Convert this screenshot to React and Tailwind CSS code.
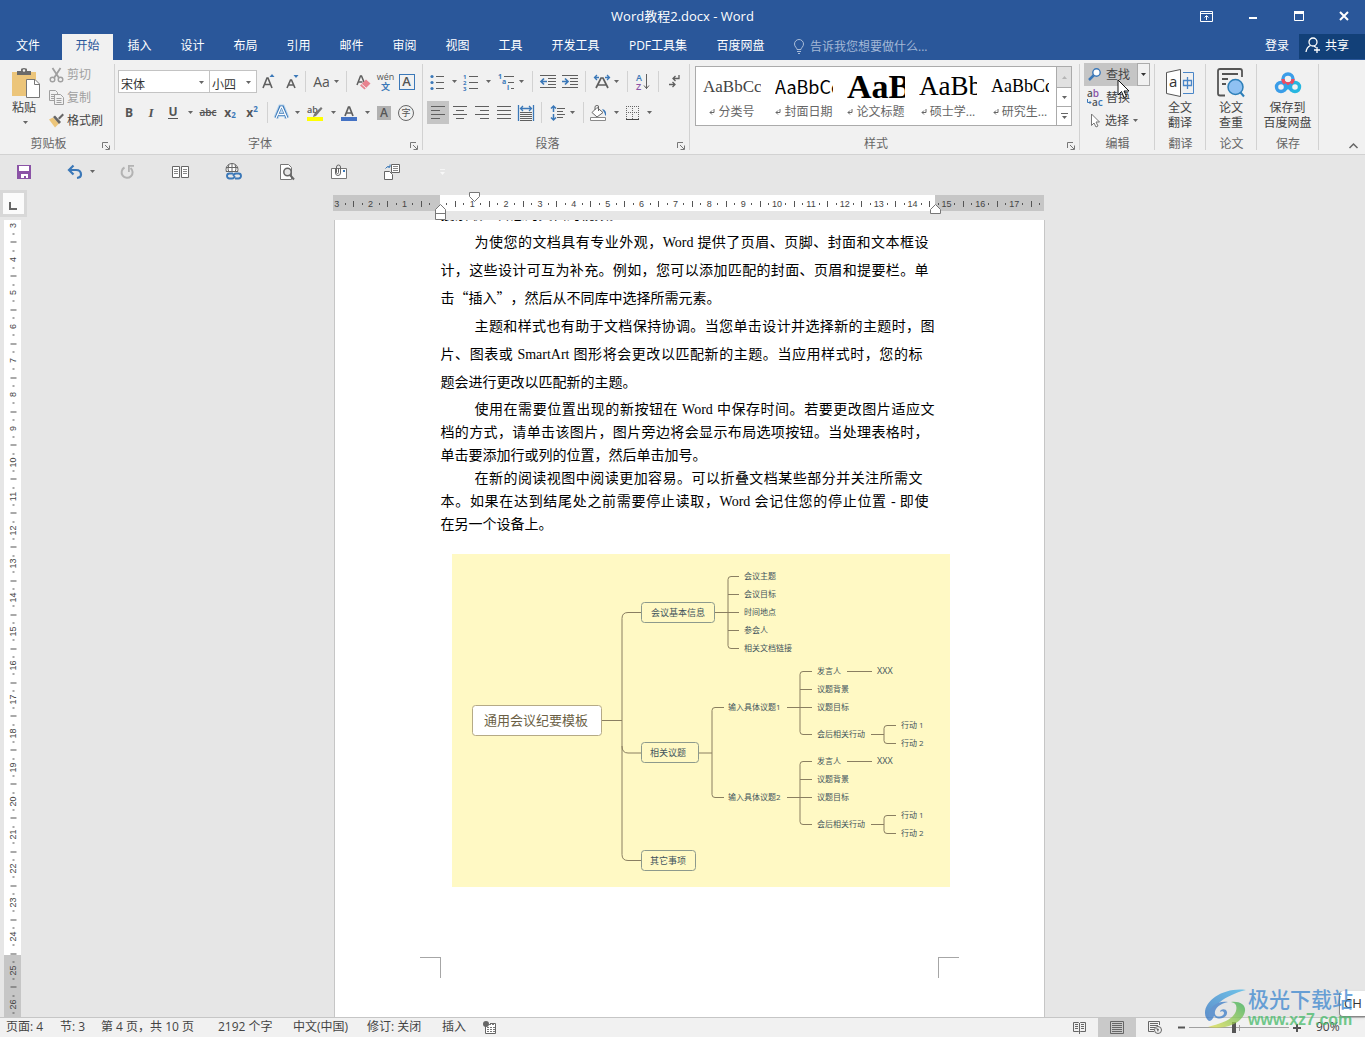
import React, { useState } from 'react';

const TABS = [
  { label: '插入', width: 'w-[53px]' },
  { label: '设计', width: 'w-[53px]' },
  { label: '布局', width: 'w-[53px]' },
  { label: '引用', width: 'w-[53px]' },
  { label: '邮件', width: 'w-[53px]' },
  { label: '审阅', width: 'w-[53px]' },
  { label: '视图', width: 'w-[53px]' },
  { label: '工具', width: 'w-[53px]' },
  { label: '开发工具', width: 'w-[77px]' },
  { label: 'PDF工具集', width: 'w-[88px]' },
  { label: '百度网盘', width: 'w-[77px]' },
];

const STYLES = [
  { name: '分类号', look: 'font-["Liberation_Serif"] text-[17px] text-[#444]' },
  { name: '封面日期', look: 'font-["Noto_Sans_CJK_SC"] text-[18px] text-black' },
  { name: '论文标题', look: 'font-["Liberation_Serif"] text-[34px] font-bold text-black' },
  { name: '硕士学...', look: 'font-["Liberation_Serif"] text-[27px] text-black' },
  { name: '研究生...', look: 'font-["Liberation_Serif"] text-[18px] text-black' },
];

// w = line width, only the justified lines have one
const LOOSE = [
  [
    { text: '为使您的文档具有专业外观，Word 提供了页眉、页脚、封面和文本框设', w: 'w-[488px]' },
    { text: '计，这些设计可互为补充。例如，您可以添加匹配的封面、页眉和提要栏。单', w: 'w-[488px]' },
    { text: '击“插入”，然后从不同库中选择所需元素。', cjk: true },
  ],
  [
    { text: '主题和样式也有助于文档保持协调。当您单击设计并选择新的主题时，图', w: 'w-[494px]' },
    { text: '片、图表或 SmartArt 图形将会更改以匹配新的主题。当应用样式时，您的标', w: 'w-[482px]' },
    { text: '题会进行更改以匹配新的主题。' },
  ],
];

const TIGHT = [
  [
    { text: '使用在需要位置出现的新按钮在 Word 中保存时间。若要更改图片适应文', w: 'w-[494px]' },
    { text: '档的方式，请单击该图片，图片旁边将会显示布局选项按钮。当处理表格时，', w: 'w-[488px]' },
    { text: '单击要添加行或列的位置，然后单击加号。' },
  ],
  [
    { text: '在新的阅读视图中阅读更加容易。可以折叠文档某些部分并关注所需文', w: 'w-[482px]' },
    { text: '本。如果在达到结尾处之前需要停止读取，Word 会记住您的停止位置 - 即使', w: 'w-[488px]' },
    { text: '在另一个设备上。' },
  ],
];

function Svg({ w = 16, h = 16, children, className = '' }) {
  return (
    <svg width={w} height={h} viewBox={`0 0 ${w} ${h}`} fill="none" className={`shrink-0 overflow-visible ${className}`} aria-hidden="true">
      {children}
    </svg>
  );
}

function Caret({ color = '#666' }) {
  return (
    <Svg w={5} h={3}>
      <path d="M0 0h5L2.5 3z" fill={color} />
    </Svg>
  );
}

function Sep() {
  return <div className="h-[21px] w-px shrink-0 bg-[#d2d2d2]" />;
}

function Tool({ label, className = '', children }) {
  return (
    <button type="button" title={label} aria-label={label} className={`flex h-[23px] shrink-0 items-center justify-center ${className}`}>
      {children}
    </button>
  );
}

function Group({ title, width, launcher, children }) {
  return (
    <section className={`relative flex h-[94px] shrink-0 flex-col ${width}`}>
      <div className="h-[76px]">{children}</div>
      <div className="relative h-4 text-center text-[12px] leading-4 text-[#666]">
        <span className={launcher ? 'pr-[18px]' : ''}>{title}</span>
        {launcher && (
          <button type="button" aria-label={`${title}设置`} className="absolute bottom-[2px] right-[5px]">
            <Svg w={8} h={8}>
              <path d="M0.500 6V0.500H6M3 3l4 4M7.500 3.500v4h-4" stroke="#777" />
            </Svg>
          </button>
        )}
      </div>
      <div className="absolute right-0 top-1 h-[86px] w-px bg-[#d2d2d2]" />
    </section>
  );
}

/* ---------- title bar and tabs ---------- */

function TitleBar() {
  return (
    <header className="bg-[#2a579a] text-white">
      <div className="relative flex h-[34px] items-center justify-center pb-[2px]">
        <h1 className="text-[13px] leading-5">Word教程2.docx - Word</h1>
        <div className="absolute right-0 top-0 flex h-8 items-center">
          <button type="button" aria-label="功能区显示选项" className="flex w-[46px] justify-center">
            <Svg w={13} h={11}>
              <path d="M0.500 0.500h12v10H0.500zM0.500 2.500h12M6.500 9V5M4.500 6.500l2-2 2 2" stroke="#fff" />
            </Svg>
          </button>
          <button type="button" aria-label="最小化" className="flex w-[46px] justify-center">
            <Svg w={9} h={11}><path d="M1 7h8" stroke="#fff" strokeWidth="2" /></Svg>
          </button>
          <button type="button" aria-label="最大化" className="flex w-[48px] justify-center">
            <Svg w={10} h={10}><path d="M0.500 1.500h9v8h-9z" stroke="#fff" /><path d="M0 1.500h10" stroke="#fff" strokeWidth="3" /></Svg>
          </button>
          <button type="button" aria-label="关闭" className="flex w-[42px] justify-center">
            <Svg w={10} h={10}><path d="M1 1l8 8M9 1l-8 8" stroke="#fff" strokeWidth="2" /></Svg>
          </button>
        </div>
      </div>

      <nav className="flex h-[26px] text-[12px] leading-[23px]">
        <button type="button" className="w-[56px] pb-[3px]">文件</button>
        <button type="button" className="ml-[6px] w-[51px] bg-[#f1f1f1] pb-[3px] text-[#2a579a]">开始</button>
        {TABS.map((tab) => (
          <button type="button" key={tab.label} className={`pb-[3px] ${tab.width}`}>{tab.label}</button>
        ))}
        <label className="ml-[14px] flex items-center gap-[5px] pb-[1px]">
          <Svg w={12} h={15}>
            <path d="M4 10.500C4 8.500 1.500 8 1.500 5a4.500 4.500 0 0 1 9 0c0 3-2.500 3.500-2.500 5.500zM4 12.500h4M5 14.500h2" stroke="#a9bcd8" />
          </Svg>
          <input placeholder="告诉我您想要做什么..." aria-label="告诉我您想要做什么" className="w-[150px] bg-transparent text-[12px] outline-none placeholder:text-[#a3b8d6]" />
        </label>
        <div className="ml-auto flex">
          <a href="#login" className="px-[10px]">登录</a>
          <button type="button" className="flex h-[25px] w-[66px] items-center gap-1 bg-[#124078] pb-[3px] pl-[6px]">
            <Svg w={16} h={16}>
              <circle cx="8" cy="5" r="4" stroke="#fff" strokeWidth="1.300" />
              <path d="M1 15c0.500-3.500 2-5.500 4.500-6.500M9 9l2 1.500M12 10v6M9 13h6" stroke="#fff" strokeWidth="1.300" />
            </Svg>
            共享
          </button>
        </div>
      </nav>
    </header>
  );
}

/* ---------- ribbon groups ---------- */

function ClipboardGroup() {
  return (
    <Group title="剪贴板" width="w-[115px]" launcher>
      <div className="flex pl-[10px]">
        <button type="button" className="flex w-[30px] flex-col items-center pt-2 text-[12px] leading-[15px] text-[#444]">
          <Svg w={28} h={30} className="ml-[2px]">
            <path d="M0 4h24v24H0z" fill="#ecc57a" />
            <path d="M5 3h4V1.500Q9 0 12 0t3 1.500V3h4v4H5z" fill="#6a6a6a" />
            <circle cx="12" cy="2.500" r="1.200" fill="#f1f1f1" />
            <path d="M14.500 11.500h8.500l4.500 4.500v13.500h-13z" fill="#fff" stroke="#777" />
            <path d="M22.500 11.500v5h5" stroke="#777" />
          </Svg>
          <span className="mt-[2px] pr-[2px]">粘贴</span>
          <span className="mt-[6px]"><Caret /></span>
        </button>
        <div className="flex flex-col pl-[9px] pt-[3px] text-[12px] text-[#a0a0a0]">
          <button type="button" className="flex h-[23px] items-center gap-[3px]">
            <Svg w={15} h={16}>
              <path d="M3.500 1l6.500 10M11.500 1l-6.500 10" stroke="#a0a0a0" strokeWidth="1.800" />
              <circle cx="3.500" cy="12.500" r="2.300" stroke="#a0a0a0" strokeWidth="1.400" />
              <circle cx="11.500" cy="12.500" r="2.300" stroke="#a0a0a0" strokeWidth="1.400" />
            </Svg>
            剪切
          </button>
          <button type="button" className="flex h-[23px] items-center gap-[3px]">
            <Svg w={15} h={15}>
              <path d="M0.500 0.500h6l2 2v8h-8zM2 4.500h4M2 6.500h3M2 8.500h3" stroke="#a0a0a0" />
              <path d="M5.500 4.500h6l3 3v7h-9z" fill="#f1f1f1" stroke="#a0a0a0" />
              <path d="M7.500 8.500h5M7.500 10.500h5M7.500 12.500h5" stroke="#a0a0a0" />
            </Svg>
            复制
          </button>
          <button type="button" className="flex h-[23px] items-center gap-[3px] text-[#444]">
            <Svg w={15} h={15}>
              <path d="M0 6.500L4 4.500l6 6L6 14.500z" fill="#ecc57a" />
              <path d="M4 4l2-1.500 6 6.500-2 2zM9 5l4.500-4.500L15 2l-4.500 4.500z" fill="#666" />
            </Svg>
            格式刷
          </button>
        </div>
      </div>
    </Group>
  );
}

function Combo({ label, value, className }) {
  return (
    <div className={`relative h-[23px] border border-[#c3c3c3] bg-white ${className}`}>
      <select aria-label={label} defaultValue={value} className="h-full w-full appearance-none pb-[2px] pl-[2px] text-[12px] leading-[19px] text-[#333] outline-none">
        <option>{value}</option>
      </select>
      <span className="pointer-events-none absolute right-[5px] top-[10px] leading-none"><Caret /></span>
    </div>
  );
}

function FontGroup() {
  return (
    <Group title="字体" width="w-[308px]" launcher>
      <div className="flex flex-col gap-2 pt-[10px] text-[#555]">
        <div className="flex items-center pl-[3px]">
          <Combo label="字体" value="宋体" className="w-[92px]" />
          <Combo label="字号" value="小四" className="-ml-px w-[48px]" />
          <Tool label="增大字号" className="w-[24px]">
            <Svg w={14} h={15}>
              <path d="M1 14L5 4h1l4 10M2.500 10.500h6" stroke="#5f5f5f" strokeWidth="1.600" />
              <path d="M7.500 3L10 0l2.500 3z" fill="#3b78b8" />
            </Svg>
          </Tool>
          <Tool label="减小字号" className="w-[22px]">
            <Svg w={13} h={15}>
              <path d="M1 14L4.500 6h1L9 14M2.500 11h5" stroke="#5f5f5f" strokeWidth="1.600" />
              <path d="M7.500 1h5L10 4z" fill="#3b78b8" />
            </Svg>
          </Tool>
          <div className="w-[2px]" />
          <Sep />
          <Tool label="更改大小写" className="w-[40px] gap-1">
            <span className="text-[14px]">Aa</span>
            <Caret />
          </Tool>
          <Sep />
          <Tool label="清除所有格式" className="w-[32px]">
            <Svg w={15} h={16}>
              <path d="M1 11L4.500 2h1L8 8M2.500 8h4" stroke="#5f5f5f" strokeWidth="1.500" />
              <path d="M10 5.500l4.500 4-6 6L4 11.500z" fill="#e8838f" />
              <path d="M5.500 10l4.500 4" stroke="#f1f1f1" />
            </Svg>
          </Tool>
          <Tool label="拼音指南" className="w-[13px] flex-col">
            <span className="text-[9px] leading-[10px]">wén</span>
            <span className="text-[9px] font-bold leading-[9px] text-[#3b78b8]">文</span>
          </Tool>
          <Tool label="字符边框" className="w-[29px]">
            <span className="flex h-4 w-4 items-center justify-center border border-[#3b78b8] text-[13px] font-semibold leading-none">A</span>
          </Tool>
        </div>

        <div className="flex items-center pl-[3px]">
          <Tool label="加粗" className="w-[22px] text-[12px] font-bold">B</Tool>
          <Tool label="倾斜" className="w-[22px] font-['Liberation_Serif'] text-[13px] font-bold italic">I</Tool>
          <Tool label="下划线" className="w-[22px] text-[12px] font-bold"><span className="border-b border-[#555] leading-[12px]">U</span></Tool>
          <Tool label="下划线样式" className="w-[13px]"><Caret /></Tool>
          <Tool label="删除线" className="w-[22px] text-[10px] font-semibold line-through">abc</Tool>
          <Tool label="下标" className="w-[22px] text-[12px] font-bold">x<sub className="text-[8px] text-[#3b78b8]">2</sub></Tool>
          <Tool label="上标" className="w-[22px] text-[12px] font-bold">x<sup className="text-[8px] text-[#3b78b8]">2</sup></Tool>
          <div className="w-[4px]" />
          <Sep />
          <Tool label="文本效果和版式" className="w-[38px] gap-[6px]">
            <Svg w={15} h={15}>
              <path d="M2 13L6.500 2h2L13 13M4.500 9.500h6" stroke="#b6d3ec" strokeWidth="5" />
              <path d="M2 13L6.500 2h2L13 13M4.500 9.500h6" stroke="#3b78b8" strokeWidth="3" />
              <path d="M2 13L7 2h1L13 13M4.500 9.500h6" stroke="#fff" strokeWidth="1.300" />
            </Svg>
            <Caret />
          </Tool>
          <Tool label="突出显示颜色" className="w-[31px] gap-2">
            <Svg w={16} h={16}>
              <text x="0" y="8" fontSize="9" fontWeight="600" fill="#555">ab</text>
              <path d="M7 9l7-7 1.500 1.500L9 11l-3 1z" fill="#777" />
              <path d="M0 12h16v4H0z" fill="#ffff00" />
            </Svg>
            <Caret />
          </Tool>
          <Tool label="字体颜色" className="w-[37px] gap-2">
            <Svg w={16} h={16}>
              <path d="M4 11L7.500 2h1L12 11M5 8h6" stroke="#5f5f5f" strokeWidth="1.700" />
              <path d="M0 12h16v4H0z" fill="#4472c4" />
            </Svg>
            <Caret />
          </Tool>
          <Tool label="字符底纹" className="w-[20px]">
            <span className="flex h-[14px] w-[14px] items-center justify-center bg-[#b1b1b1] text-[12px] font-semibold leading-none">A</span>
          </Tool>
          <Tool label="带圈字符" className="w-[24px]">
            <span className="flex h-4 w-4 items-center justify-center rounded-full border border-[#666] text-[9px] leading-none">字</span>
          </Tool>
        </div>
      </div>
    </Group>
  );
}

function AlignIcon({ d }) {
  return (
    <Svg w={14} h={13}>
      <path d={d} stroke="#5f5f5f" />
    </Svg>
  );
}

function ParagraphGroup() {
  return (
    <Group title="段落" width="w-[267px]" launcher>
      <div className="flex flex-col gap-2 pt-[10px]">
        <div className="flex items-center pl-[3px]">
          <Tool label="项目符号" className="w-[34px] gap-2">
            <Svg w={14} h={16}>
              <circle cx="2" cy="2.500" r="1.600" fill="#3b78b8" />
              <circle cx="2" cy="8.500" r="1.600" fill="#3b78b8" />
              <circle cx="2" cy="14.500" r="1.600" fill="#3b78b8" />
              <path d="M6 2.500h8M6 8.500h8M6 14.500h8" stroke="#5f5f5f" />
            </Svg>
            <Caret />
          </Tool>
          <Tool label="编号" className="w-[34px] gap-2">
            <Svg w={15} h={16}>
              <g fill="#3b78b8" fontSize="6" fontWeight="700">
                <text x="0" y="5">1</text><text x="0" y="11">2</text><text x="0" y="17">3</text>
              </g>
              <path d="M6 2.500h9M6 8.500h9M6 14.500h9" stroke="#5f5f5f" />
            </Svg>
            <Caret />
          </Tool>
          <Tool label="多级列表" className="w-[34px] gap-[4px]">
            <Svg w={17} h={16}>
              <g fill="#3b78b8" fontSize="7" fontWeight="700">
                <text x="0" y="5">1</text><text x="4" y="10">a</text><text x="9" y="16">i</text>
              </g>
              <path d="M6 2.500h10M10 8.500h6M13 14.500h3" stroke="#5f5f5f" />
            </Svg>
            <Caret />
          </Tool>
          <div className="w-[4px]" />
          <Sep />
          <Tool label="减少缩进量" className="ml-[4px] w-[22px]">
            <Svg w={16} h={13}>
              <path d="M0 0.500h16M8 3.500h8M8 6.500h8M8 9.500h8M0 12.500h16" stroke="#5f5f5f" />
              <path d="M1 6.500h6M4 3.500l-3 3 3 3" stroke="#3b78b8" strokeWidth="1.700" />
            </Svg>
          </Tool>
          <Tool label="增加缩进量" className="w-[22px]">
            <Svg w={16} h={13}>
              <path d="M0 0.500h16M8 3.500h8M8 6.500h8M8 9.500h8M0 12.500h16" stroke="#5f5f5f" />
              <path d="M0 6.500h6M3 3.500l3 3-3 3" stroke="#3b78b8" strokeWidth="1.700" />
            </Svg>
          </Tool>
          <div className="w-[4px]" />
          <Sep />
          <Tool label="中文版式" className="w-[41px] gap-1">
            <Svg w={16} h={15}>
              <path d="M2 14L7 4h2l5 10M4 11h8" stroke="#5f5f5f" strokeWidth="1.700" />
              <path d="M0.500 3.500H5M3 1L0.500 3.500 3 6M15.500 3.500H11M13 1l2.500 2.500L13 6" stroke="#3b78b8" strokeWidth="1.300" />
            </Svg>
            <Caret />
          </Tool>
          <Sep />
          <Tool label="排序" className="w-[30px]">
            <Svg w={14} h={16}>
              <text x="0" y="7" fontSize="9" fontWeight="600" fill="#3b78b8">A</text>
              <text x="0" y="16" fontSize="9" fontWeight="600" fill="#8b53a6">Z</text>
              <path d="M10.500 0v15M8 11.500l2.500 3 2.500-3" stroke="#5f5f5f" />
            </Svg>
          </Tool>
          <Sep />
          <Tool label="显示编辑标记" className="w-[30px]">
            <Svg w={11} h={13}>
              <path d="M10 0v3.500H4M6.500 1L4 3.500 6.500 6M0 9.500h6M3.500 7L6 9.500 3.500 12" stroke="#5f5f5f" strokeWidth="1.300" />
            </Svg>
          </Tool>
        </div>

        <div className="flex items-center pl-[4px]">
          <Tool label="左对齐" className="w-[22px] bg-[#c5c5c5]"><AlignIcon d="M0 0.500h14M0 4.500h9M0 8.500h14M0 12.500h9" /></Tool>
          <Tool label="居中" className="w-[22px]"><AlignIcon d="M0 0.500h14M3 4.500h8M0 8.500h14M3 12.500h8" /></Tool>
          <Tool label="右对齐" className="w-[22px]"><AlignIcon d="M0 0.500h14M5 4.500h9M0 8.500h14M5 12.500h9" /></Tool>
          <Tool label="两端对齐" className="w-[22px]"><AlignIcon d="M0 0.500h14M0 4.500h14M0 8.500h14M0 12.500h14" /></Tool>
          <Tool label="分散对齐" className="w-[22px]">
            <Svg w={16} h={16}>
              <path d="M0.500 0v16M15.500 0v16M2.500 3.500h11M5 1L2.500 3.500 5 6M11 1l2.500 2.500L11 6" stroke="#3b78b8" strokeWidth="1.300" />
              <path d="M2 7.500h12M2 9.500h12M2 11.500h12M2 13.500h12M2 15.500h12" stroke="#5f5f5f" />
            </Svg>
          </Tool>
          <div className="w-[4px]" />
          <Sep />
          <Tool label="行和段落间距" className="w-[41px] gap-[5px]">
            <Svg w={15} h={16}>
              <path d="M3.500 1v6M1 3.500L3.500 1 6 3.500M3.500 9v6M1 12.500L3.500 15 6 12.500" stroke="#3b78b8" strokeWidth="1.500" />
              <path d="M7 3.500h8M7 6.500h6M7 9.500h8M7 12.500h6" stroke="#5f5f5f" />
            </Svg>
            <Caret />
          </Tool>
          <Sep />
          <Tool label="底纹" className="w-[41px] gap-[7px]">
            <Svg w={17} h={16}>
              <path d="M7 2.500l6 5-6 4.500-5-4.500zM5 5V2Q5 0.500 7 0.500T8.500 2v4" fill="#fff" stroke="#666" />
              <path d="M12 4q5 1 4 7-1 0-1.500-3z" fill="#3b78b8" />
              <path d="M0.500 12.500h15v3h-15z" fill="#fff" stroke="#8a8a8a" />
            </Svg>
            <Caret />
          </Tool>
          <Tool label="边框" className="w-[27px] gap-2">
            <Svg w={13} h={14}>
              <path d="M0 0.500h13M0 6.500h13M0.500 0v13M6.500 0v13M12.500 0v13" stroke="#666" strokeDasharray="1 1" />
              <path d="M0 13.500h13" stroke="#444" />
            </Svg>
            <Caret />
          </Tool>
        </div>
      </div>
    </Group>
  );
}

function StylesGroup() {
  return (
    <Group title="样式" width="w-[390px]" launcher>
      <div className="pl-[5px] pt-[6px]">
        <div className="flex h-[60px] w-[377px] border border-[#ababab] bg-white">
          <div className="flex flex-1">
            {STYLES.map((s) => (
              <button type="button" key={s.name} className="flex w-[72px] flex-col items-center pt-1">
                <span className={`flex h-[31px] w-[58px] items-center overflow-hidden whitespace-nowrap leading-[31px] ${s.look}`}>AaBbCc</span>
                <span className="flex items-center gap-[3px] whitespace-nowrap text-[12px] leading-[19px] text-[#666]">
                  <Svg w={6} h={6}><path d="M5 0v3.500H1M3 1.500l-2 2 2 2" stroke="#666" /></Svg>
                  {s.name}
                </span>
              </button>
            ))}
          </div>
          <div className="flex w-[15px] flex-col border-l border-[#ababab]">
            <button type="button" aria-label="上一行" className="flex h-5 items-center justify-center bg-[#e1e1e1]"><span className="rotate-180"><Caret color="#b5b5b5" /></span></button>
            <button type="button" aria-label="下一行" className="flex h-[19px] items-center justify-center border-t border-[#ababab]"><Caret /></button>
            <button type="button" aria-label="其他" className="flex h-[19px] items-center justify-center border-t border-[#ababab]">
              <Svg w={7} h={6}><path d="M0 0.500h7" stroke="#666" /><path d="M1 3h5L3.500 6z" fill="#666" /></Svg>
            </button>
          </div>
        </div>
      </div>
    </Group>
  );
}

function EditingGroup() {
  return (
    <Group title="编辑" width="w-[75px]">
      <div className="flex flex-col pl-[4px] pt-[3px] text-[12px] text-[#444]">
        <div className="relative flex h-[23px]">
          <button type="button" className="flex w-[53px] items-center gap-[5px] bg-[#c5c5c5] pl-1">
            <Svg w={13} h={13}>
              <path d="M1 12l5-5" stroke="#3b78b8" strokeWidth="2.500" />
              <circle cx="8.500" cy="4.500" r="3.700" fill="#fff" stroke="#3b78b8" strokeWidth="1.400" />
            </Svg>
            查找
          </button>
          <button type="button" aria-label="查找选项" className="flex w-[13px] items-center justify-center border border-[#ababab] bg-[#f1f1f1]"><Caret color="#333" /></button>
          {/* mouse pointer */}
          <Svg w={13} h={20} className="absolute left-[33px] top-[16px] z-10">
            <path d="M1 1v15l3.500-3.500 2.500 6 2.500-1-2.500-5.500h5z" fill="#fff" stroke="#111" />
          </Svg>
        </div>
        <button type="button" className="flex h-[23px] items-center gap-[3px] pl-[3px]">
          <Svg w={16} h={16}>
            <g fontSize="10" fontWeight="600">
              <text x="0" y="7" fill="#555">a<tspan fill="#8b53a6">b</tspan></text>
              <text x="5" y="16" fill="#555">a<tspan fill="#3b78b8">c</tspan></text>
            </g>
            <path d="M0.500 9v3.500H4M2.500 11L4 12.500 2.500 14" stroke="#3b78b8" />
          </Svg>
          替换
        </button>
        <button type="button" className="flex h-[23px] items-center gap-[4px] pl-[7px]">
          <Svg w={10} h={15}>
            <path d="M0.500 1v11.500l2.500-2.500 2 4 2-1-2-4h3.500z" fill="#fff" stroke="#777" />
          </Svg>
          选择
          <Caret />
        </button>
      </div>
    </Group>
  );
}

function BigButton({ lines, children }) {
  return (
    <button type="button" className="flex w-full flex-col items-center pr-[1px] pt-[8px] text-[12px] leading-[15px] text-[#444]">
      <span className="mb-[3px] flex h-[29px] items-center">{children}</span>
      {lines.map((l) => (
        <span key={l}>{l}</span>
      ))}
    </button>
  );
}

function Ribbon() {
  return (
    <div className="relative flex h-[95px] border-b border-[#d2d2d2] bg-[#f1f1f1]">
      <ClipboardGroup />
      <FontGroup />
      <ParagraphGroup />
      <StylesGroup />
      <EditingGroup />
      <Group title="翻译" width="w-[51px]">
        <BigButton lines={['全文', '翻译']}>
          <Svg w={28} h={28}>
            <path d="M0.500 3.500l14-3v27l-14-3z" fill="#fff" stroke="#555" />
            <text x="3" y="18" fontSize="15" fill="#333">a</text>
            <path d="M17 3.500h10.500v21H17" stroke="#4a86c8" />
            <path d="M17.500 11.500h8v5h-8zM21.500 8v12" stroke="#4a86c8" strokeWidth="1.300" />
          </Svg>
        </BigButton>
      </Group>
      <Group title="论文" width="w-[51px]">
        <BigButton lines={['论文', '查重']}>
          <Svg w={28} h={29}>
            <path d="M8 27.500H3Q1 27.500 1 25.500V3Q1 1 3 1h20q2 0 2 2v6" stroke="#555" strokeWidth="1.800" />
            <path d="M5 6h16M5 11h6M5 16h4" stroke="#555" strokeWidth="2" />
            <circle cx="18.500" cy="19" r="7.500" fill="#8fc1f2" stroke="#2d7fb8" strokeWidth="1.500" />
            <path d="M23.500 24.500l3.500 4" stroke="#2d7fb8" strokeWidth="2" />
          </Svg>
        </BigButton>
      </Group>
      <Group title="保存" width="w-[62px]">
        <BigButton lines={['保存到', '百度网盘']}>
          <Svg w={26} h={22}>
            <circle cx="6" cy="15" r="4.500" stroke="#3b9de8" strokeWidth="3.400" />
            <circle cx="20" cy="15" r="4.500" stroke="#27b7e0" strokeWidth="3.400" />
            <circle cx="13" cy="7" r="5" stroke="#3b9de8" strokeWidth="3.400" />
            <path d="M8 7a5 5 0 0 0 10 0" stroke="#f04a5e" strokeWidth="3.400" />
            <path d="M9.500 12l7 6.500M16.500 12l-7 6.500" stroke="#2fa6e6" strokeWidth="2.400" />
          </Svg>
        </BigButton>
      </Group>
      <button type="button" aria-label="折叠功能区" className="absolute bottom-[5px] right-[7px]">
        <Svg w={9} h={6}><path d="M0.500 5L4.500 1l4 4" stroke="#666" strokeWidth="1.500" /></Svg>
      </button>
    </div>
  );
}

function QuickAccess() {
  return (
    <div className="flex h-[35px] items-center pb-[2px] pl-[16px]">
      <Tool label="保存" className="w-[16px]">
        <Svg w={14} h={14}>
          <path d="M0 0h14v14H0z" fill="#8b53a6" />
          <path d="M2 1h10v5H2zM4 9h7v4H9v-2H7v2H4z" fill="#fff" />
        </Svg>
      </Tool>
      <Tool label="撤消" className="ml-[33px] w-[32px] gap-2">
        <Svg w={15} h={14}>
          <path d="M2 5h7q5 0 5 4.500Q14 12.500 10 13M6.500 0.500L2 5l4.500 4.500" stroke="#3b78b8" strokeWidth="2.200" />
        </Svg>
        <Caret />
      </Tool>
      <Tool label="重复" className="ml-[21px] w-[18px]">
        <Svg w={14} h={14}>
          <path d="M4.500 2.500A5.500 5.500 0 1 0 10.500 3" stroke="#b3b3b3" strokeWidth="2" />
          <path d="M8 0h6v1.800H9.800V7H8z" fill="#b3b3b3" />
        </Svg>
      </Tool>
      <Tool label="并排" className="ml-[35px] w-[18px]">
        <Svg w={17} h={12}>
          <path d="M0.500 0.500h7v11h-7zM9.500 0.500h7v11h-7z" fill="#fff" stroke="#666" />
          <path d="M2 3.500h4M2 5.500h4M2 7.500h4M11 3.500h4M11 5.500h4M11 7.500h4" stroke="#888" />
        </Svg>
      </Tool>
      <Tool label="超链接" className="ml-[35px] w-[18px]">
        <Svg w={17} h={17}>
          <circle cx="7" cy="6.500" r="6" fill="#fff" stroke="#666" />
          <path d="M1 4.500h12M1 8.500h12M7 0.500v12M4 1.500q-2 5 0 8M10 1.500q2 5 0 8" stroke="#666" />
          <path d="M0 9h17v8H0z" fill="#e6e6e6" />
          <path d="M8 10.500H4.500a2.500 2.500 0 0 0 0 5H7q2.500 0 2.500-2.500M10 15.500h3.500a2.500 2.500 0 0 0 0-5H11q-2.500 0-2.500 2.500" stroke="#3b78b8" strokeWidth="1.900" />
        </Svg>
      </Tool>
      <Tool label="打印预览" className="ml-[36px] w-[18px]">
        <Svg w={15} h={16}>
          <path d="M0.500 0.500h8l3 3v12h-11z" fill="#fff" stroke="#777" />
          <circle cx="7.500" cy="8" r="3.700" fill="#e6e6e6" stroke="#666" strokeWidth="1.500" />
          <path d="M10 11l4 4.500" stroke="#666" strokeWidth="2" />
        </Svg>
      </Tool>
      <Tool label="附件" className="ml-[34px] w-[18px]">
        <Svg w={16} h={15}>
          <path d="M0.500 4.500h15v10H0.500z" fill="#fff" stroke="#777" />
          <path d="M4.500 4v5a2.500 2.500 0 0 0 5 0V3a2 2 0 0 0-4 0v5.500a1 1 0 0 0 2 0V4" stroke="#666" />
          <path d="M12 6h2v2h-2z" fill="#3b78b8" />
        </Svg>
      </Tool>
      <Tool label="导出" className="ml-[35px] w-[18px]">
        <Svg w={17} h={16}>
          <path d="M7.500 0.500h8v8h-8z" fill="#fff" stroke="#666" />
          <path d="M9 2.500h5M9 4.500h5M9 6.500h5" stroke="#888" />
          <path d="M0.500 7.500h5l3 3v5h-8z" fill="#fff" stroke="#666" />
          <path d="M1.500 4.500Q3 1.500 6 3M6 0.500V3H3.500" stroke="#3b78b8" />
        </Svg>
      </Tool>
      <Tool label="自定义快速访问工具栏" className="ml-[32px] w-[18px]">
        <Svg w={5} h={6}><path d="M0 0.500h5" stroke="#fff" opacity="0.600" /><path d="M0 3h5L2.500 6z" fill="#fff" opacity="0.700" /></Svg>
      </Tool>
    </div>
  );
}

/* ---------- rulers ---------- */

// every fourth tick is a number, with dot / bar / dot between
const tickAt = (i, number) => (i % 4 === 0 ? number : i % 4 === 2 ? '|' : '·');

function TickMark({ value }) {
  if (value === '|') return <span className="block h-[6px] w-px bg-[#555]" />;
  if (value === '·') return <span className="block h-[2px] w-px bg-[#555]" />;
  return <span>{value}</span>;
}

function HorizontalRuler() {
  const ticks = Array.from({ length: 84 }, (_, i) => tickAt(i, i === 12 ? '' : Math.abs(i / 4 - 3)));
  return (
    <div className="flex h-[30px] pr-[16px]">
      <div className="relative mx-auto mt-[5px] h-4 w-[711px] bg-[#c6c6c6]">
        <div className="absolute inset-y-0 left-[107px] right-[109px] bg-white" />
        <div className="relative flex h-full pt-[2px] font-['Liberation_Sans'] text-[9px] leading-[14px] text-[#444]">
          {ticks.map((t, i) => (
            <div key={i} className="flex w-0 flex-1 items-center justify-center">
              <TickMark value={t} />
            </div>
          ))}
        </div>
        <Svg w={11} h={10} className="absolute -top-[3px] left-[136px]">
          <path d="M0.500 0.500h10v4l-5 5-5-5z" fill="#fff" stroke="#777" />
        </Svg>
        <Svg w={11} h={16} className="absolute left-[102px] top-[9px]">
          <path d="M0.500 15.500v-10l5-5 5 5v10zM0.500 9.500h10" fill="#fff" stroke="#777" />
        </Svg>
        <Svg w={11} h={10} className="absolute right-[103px] top-[9px]">
          <path d="M0.500 9.500v-4l5-5 5 5v4z" fill="#fff" stroke="#777" />
        </Svg>
      </div>
    </div>
  );
}

function VerticalRuler() {
  const ticks = Array.from({ length: 94 }, (_, i) => tickAt(i, i / 4 + 3));
  return (
    <div className="flex w-[27px] shrink-0 flex-col">
      <div className="flex h-[27px] w-[27px] items-center justify-center bg-[#d8d8d8] pr-[1px]">
        <button type="button" aria-label="左对齐制表符" className="flex h-[21px] w-[21px] items-center justify-center bg-[#fbfbfb] pt-1">
          <Svg w={8} h={8}><path d="M1 0v7h7" stroke="#666" strokeWidth="2" /></Svg>
        </button>
      </div>
      <div className="ml-[4px] mt-[3px] flex min-h-0 w-[17px] flex-1 flex-col bg-white bg-linear-to-t from-[#c6c6c6] from-[62px] to-white to-[62px] pt-[1px] font-['Liberation_Sans'] text-[9px] text-[#444]">
        {ticks.map((t, i) => (
          <div key={i} className="flex h-0 flex-1 items-center justify-center">
            <div className="flex -rotate-90 items-center justify-center pt-[2px] leading-none"><TickMark value={t} /></div>
          </div>
        ))}
      </div>
    </div>
  );
}

/* ---------- document ---------- */

function Paragraph({ lines }) {
  return (
    <p>
      {lines.map((line, i) => (
        <span
          key={line.text}
          className={`block whitespace-nowrap ${i === 0 ? 'pl-[34px]' : ''} ${line.w ? `[text-align-last:justify] ${line.w}` : ''}`}
        >
          {line.cjk ? (
            <span className='font-["Noto_Sans_CJK_SC"] leading-none [text-spacing-trim:space-all]'>{line.text}</span>
          ) : (
            line.text
          )}
        </span>
      ))}
    </p>
  );
}

function TopicBranch({ y, name }) {
  return (
    <g transform={`translate(0 ${y})`}>
      <g stroke="#8a7f61" fill="none">
        <path d="M335 35.500h25M360 -0.500h-9q-3 0-3 3v57q0 3 3 3h9M348 17.500h12" />
        <path d="M395 -0.500h25M419 62.500h13M444 53.500h-9q-3 0-3 3v12q0 3 3 3h9" />
      </g>
      <g fontSize="8" fill="#3f545c">
        <text x="276" y="38">{name}</text>
        <text x="365" y="2">发言人</text>
        <text x="425" y="2" fontSize="9">XXX</text>
        <text x="365" y="20">议题背景</text>
        <text x="365" y="38">议题目标</text>
        <text x="365" y="65">会后相关行动</text>
        <text x="449" y="56">行动 1</text>
        <text x="449" y="74">行动 2</text>
      </g>
    </g>
  );
}

function MindMap() {
  return (
    <svg width="498" height="333" viewBox="0 0 498 333" className='font-["Open_Sans","Noto_Sans_CJK_SC",sans-serif]' role="img" aria-label="通用会议纪要模板">
      <rect width="498" height="333" fill="#fff9c4" />
      <g stroke="#8a7f61" fill="none">
        <path d="M150 166.500h20M190 58.500h-14q-6 0-6 6v236q0 6 6 6h14M170 192q0 7 6 7h14" />
        <path d="M263 58.500h24M287 22.500h-8q-3 0-3 3v66q0 3 3 3h8M276 40.500h11M276 76.500h11" />
        <path d="M247 199h13M272 153.500h-9q-3 0-3 3v84q0 3 3 3h9" />
      </g>
      <rect x="20.500" y="151.500" width="129" height="30" rx="3" fill="#fff" stroke="#b5aa86" />
      <g fill="#fff9c4" stroke="#8d9a8c">
        <rect x="189.500" y="48.500" width="73" height="20" rx="3" />
        <rect x="189.500" y="188.500" width="57" height="20" rx="3" />
        <rect x="189.500" y="296.500" width="54" height="20" rx="3" />
      </g>
      <text x="32" y="171" fontSize="13" fill="#6b5f45">通用会议纪要模板</text>
      <g fontSize="9" fill="#3f545c">
        <text x="199" y="62">会议基本信息</text>
        <text x="198" y="202">相关议题</text>
        <text x="198" y="310">其它事项</text>
      </g>
      <g fontSize="8" fill="#3f545c">
        <text x="292" y="25">会议主题</text>
        <text x="292" y="43">会议目标</text>
        <text x="292" y="61">时间地点</text>
        <text x="292" y="79">参会人</text>
        <text x="292" y="97">相关文档链接</text>
      </g>
      <TopicBranch y={118} name="输入具体议题1" />
      <TopicBranch y={208} name="输入具体议题2" />
    </svg>
  );
}

function Page() {
  return (
    <div className="min-h-0 flex-1 overflow-hidden pr-[14px]">
      <article className="mx-auto h-full w-[711px] overflow-hidden border-x border-[#c6c6c6] bg-white pl-[106px] font-['Liberation_Serif','Noto_Sans_CJK_SC',serif] text-[14px] text-black">
        <div className="-mt-[19px] leading-[28px]">
          <p>搜索最适合您的文档的视频。</p>
          {LOOSE.map((lines, i) => <Paragraph key={i} lines={lines} />)}
        </div>
        <div className="mt-[1px] leading-[23px]">
          {TIGHT.map((lines, i) => <Paragraph key={i} lines={lines} />)}
        </div>
        <div className="ml-[11px] mt-[18px]">
          <MindMap />
        </div>
        {/* bottom margin crop marks */}
        <div className="-ml-[21px] mt-[70px] flex w-[539px] justify-between">
          <div className="h-[21px] w-[21px] border-r border-t border-[#a6a6a6]" />
          <div className="h-[21px] w-[21px] border-l border-t border-[#a6a6a6]" />
        </div>
      </article>
    </div>
  );
}

/* ---------- status bar ---------- */

function StatusBar() {
  const [zoom, setZoom] = useState(45);
  return (
    <footer className="flex h-5 shrink-0 items-center border-t border-[#c6c6c6] bg-[#f1f1f1] pl-[6px] text-[12px] leading-[17px] text-[#444]">
      <div className="flex items-center pb-[2px]">
        <span className="w-[54px]">页面: 4</span>
        <span className="w-[41px]">节: 3</span>
        <span className="w-[117px]">第 4 页，共 10 页</span>
        <span className="w-[75px]">2192 个字</span>
        <span className="w-[74px]">中文(中国)</span>
        <span className="w-[75px]">修订: 关闭</span>
        <span className="w-[41px]">插入</span>
      </div>
      <Svg w={13} h={13}>
        <path d="M2.500 5v7.500h10v-10H7" fill="#fff" stroke="#666" />
        <path d="M6 3.500h6M4 6.500h8M4 8.500h8M4 10.500h8" stroke="#777" strokeDasharray="2 1" />
        <circle cx="3" cy="3" r="3" fill="#666" />
      </Svg>
      <div className="ml-auto flex h-full items-center">
        <button type="button" aria-label="阅读视图" className="flex w-[38px] justify-center">
          <Svg w={13} h={13}>
            <path d="M0.500 1.500h5l1 1 1-1h5v9h-5l-1 1-1-1h-5zM6.500 2v11M2 3.500h3M2 5.500h3M2 7.500h3M8 3.500h3M8 5.500h3M8 7.500h3" stroke="#666" />
          </Svg>
        </button>
        <button type="button" aria-label="页面视图" className="flex h-full w-[38px] items-center justify-center bg-[#c9c9c9]">
          <Svg w={14} h={13}>
            <path d="M0.500 0.500h13v12H0.500zM2 2.500h10M2 4.500h10M2 6.500h10M2 8.500h10M2 10.500h10" stroke="#666" />
          </Svg>
        </button>
        <button type="button" aria-label="Web 版式视图" className="flex w-[38px] justify-center">
          <Svg w={14} h={13}>
            <path d="M11.500 4V0.500h-11v10H6M2 2.500h8M2 4.500h8M2 6.500h5M2 8.500h4" stroke="#666" />
            <circle cx="10" cy="9" r="3.500" fill="#f1f1f1" stroke="#666" />
            <path d="M8 7l3 1-1 3z" fill="#666" />
          </Svg>
        </button>
        <button type="button" aria-label="缩小" className="flex w-[15px] justify-center"><Svg w={7} h={7}><path d="M0 3.500h7" stroke="#555" strokeWidth="2" /></Svg></button>
        <div className="relative flex w-[100px] items-center">
          <div className="absolute left-[50px] top-1 h-[6px] w-px bg-[#a0a0a0]" />
          <input
            type="range"
            aria-label="缩放"
            value={zoom}
            onChange={(e) => setZoom(Number(e.target.value))}
            className="relative h-[14px] w-full appearance-none bg-transparent [&::-webkit-slider-runnable-track]:h-px [&::-webkit-slider-runnable-track]:bg-[#a0a0a0] [&::-webkit-slider-thumb]:-mt-[5px] [&::-webkit-slider-thumb]:h-[11px] [&::-webkit-slider-thumb]:w-1 [&::-webkit-slider-thumb]:appearance-none [&::-webkit-slider-thumb]:bg-[#555]"
          />
        </div>
        <button type="button" aria-label="放大" className="flex w-[15px] justify-center"><Svg w={8} h={8}><path d="M0 4h8M4 0v8" stroke="#555" strokeWidth="2" /></Svg></button>
        <button type="button" className="w-[61px] pb-[2px] pl-3 text-left">90%</button>
      </div>
    </footer>
  );
}

function SiteMark() {
  return (
    <div className="pointer-events-none absolute bottom-[7px] right-[12px] flex items-center gap-[2px] opacity-75">
      <svg width="42" height="40" viewBox="0 0 42 40" fill="none" aria-hidden="true">
        <defs>
          <linearGradient id="swirlBlue" x1="0" y1="1" x2="1" y2="0">
            <stop offset="0" stopColor="#2f6fc0" />
            <stop offset="1" stopColor="#49b8ea" />
          </linearGradient>
          <linearGradient id="swirlGreen" x1="0" y1="1" x2="1" y2="0">
            <stop offset="0" stopColor="#e6e04a" />
            <stop offset="1" stopColor="#32ad55" />
          </linearGradient>
        </defs>
        <path d="M42 1C22-2 1 10 1 24q0 5 4 8C5 20 18 7 42 1z" fill="url(#swirlBlue)" />
        <path d="M5 32C2 20 12 11 24 13c-9 2-14 7-13 12 1 4 9 3 9-1 0-2-3-2-4-1 0-3 6-4 7 0 1 6-9 9-13 4-1 3-3 5-5 5z" fill="#3a7cc8" />
        <path d="M27 13q7 1 5 9C29 31 18 34 4 38c18 3 35-4 37-16 1-6-5-10-14-9z" fill="url(#swirlGreen)" />
      </svg>
      <div className="flex flex-col whitespace-nowrap">
        <span className="text-[21px] font-medium leading-[22px] text-[#3c86cf]">极光下载站</span>
        <span className="font-['Liberation_Sans'] text-[16px] font-bold leading-[20px] text-[#45b968]">www.xz7.com</span>
      </div>
    </div>
  );
}

export default function App() {
  return (
    <div className='relative flex h-screen flex-col overflow-hidden bg-[#e6e6e6] font-["Open_Sans","Noto_Sans_CJK_SC",sans-serif]'>
      <TitleBar />
      <Ribbon />
      <QuickAccess />
      <main className="flex min-h-0 flex-1">
        <VerticalRuler />
        <div className="flex min-w-0 flex-1 flex-col">
          <HorizontalRuler />
          <Page />
        </div>
      </main>
      <StatusBar />
      <div className="absolute bottom-5 right-0 h-[26px] w-[26px] rounded-l-[4px] border-b border-l border-[#888] bg-white pl-1 text-[13px] leading-[24px] text-[#333] shadow">CH</div>
      <SiteMark />
    </div>
  );
}
